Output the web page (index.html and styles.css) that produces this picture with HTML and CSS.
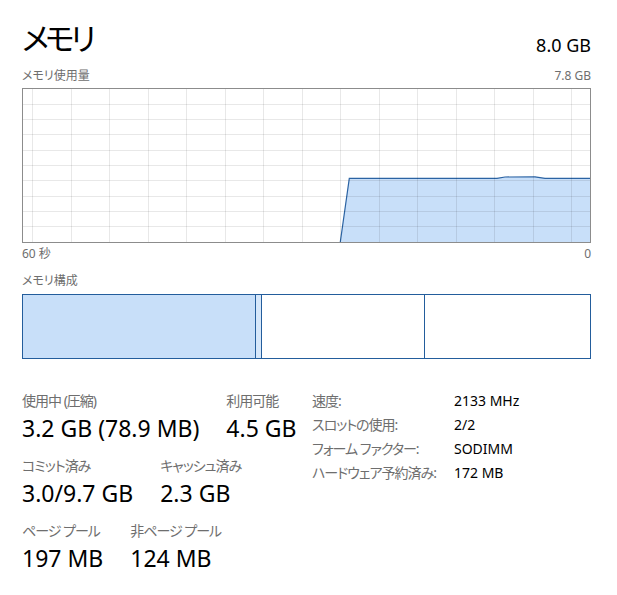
FILE: index.html
```html
<!DOCTYPE html>
<html lang="ja">
<head>
<meta charset="utf-8">
<title>メモリ</title>
<link rel="stylesheet" href="styles.css">
</head>
<body>
<div class="page">
  <header class="header">
    <h1 class="title jp">メモリ</h1>
    <div class="total">8.0 GB</div>
  </header>

  <div class="caption-row">
    <span class="jp">メモリ使用量</span>
    <span>7.8 GB</span>
  </div>

  <div class="graph">
    <svg class="graph-svg" viewBox="0 0 567 153" width="567" height="153">
      <polygon class="area" points="317.3,153 326.3,89.3 474,89.3 482,88 512,87.8 522,89.3 567,89.3 567,153"/>
      <polyline class="area-line" points="317.3,153 326.3,89.3 474,89.3 482,88 512,87.8 522,89.3 567,89.3"/>
      <g class="grid">
        <line x1="9.5" y1="0" x2="9.5" y2="153"/>
        <line x1="48" y1="0" x2="48" y2="153"/>
        <line x1="86.5" y1="0" x2="86.5" y2="153"/>
        <line x1="125" y1="0" x2="125" y2="153"/>
        <line x1="163.5" y1="0" x2="163.5" y2="153"/>
        <line x1="202" y1="0" x2="202" y2="153"/>
        <line x1="240.5" y1="0" x2="240.5" y2="153"/>
        <line x1="279" y1="0" x2="279" y2="153"/>
        <line x1="317.5" y1="0" x2="317.5" y2="153"/>
        <line x1="356" y1="0" x2="356" y2="153"/>
        <line x1="394.5" y1="0" x2="394.5" y2="153"/>
        <line x1="433" y1="0" x2="433" y2="153"/>
        <line x1="471.5" y1="0" x2="471.5" y2="153"/>
        <line x1="510" y1="0" x2="510" y2="153"/>
        <line x1="548.5" y1="0" x2="548.5" y2="153"/>
        <line x1="0" y1="15.3" x2="567" y2="15.3"/>
        <line x1="0" y1="30.6" x2="567" y2="30.6"/>
        <line x1="0" y1="45.9" x2="567" y2="45.9"/>
        <line x1="0" y1="61.2" x2="567" y2="61.2"/>
        <line x1="0" y1="76.5" x2="567" y2="76.5"/>
        <line x1="0" y1="91.8" x2="567" y2="91.8"/>
        <line x1="0" y1="107.1" x2="567" y2="107.1"/>
        <line x1="0" y1="122.4" x2="567" y2="122.4"/>
        <line x1="0" y1="137.7" x2="567" y2="137.7"/>
      </g>
    </svg>
  </div>

  <div class="axis-row">
    <span class="jp">60 秒</span>
    <span>0</span>
  </div>

  <div class="caption jp">メモリ構成</div>

  <div class="composition">
    <div class="seg seg-inuse" style="width:233px"></div>
    <div class="seg seg-modified" style="width:6px"></div>
    <div class="seg seg-standby" style="width:163px"></div>
    <div class="seg seg-free"></div>
  </div>

  <section class="stats">
    <div class="stats-left">
      <div class="stat-row">
        <div class="stat">
          <div class="stat-label jp">使用中 (圧縮)</div>
          <div class="stat-value">3.2 GB (78.9 MB)</div>
        </div>
        <div class="stat">
          <div class="stat-label jp">利用可能</div>
          <div class="stat-value">4.5 GB</div>
        </div>
      </div>
      <div class="stat-row">
        <div class="stat">
          <div class="stat-label jp">コミット済み</div>
          <div class="stat-value">3.0/9.7 GB</div>
        </div>
        <div class="stat">
          <div class="stat-label jp">キャッシュ済み</div>
          <div class="stat-value">2.3 GB</div>
        </div>
      </div>
      <div class="stat-row">
        <div class="stat">
          <div class="stat-label jp">ページ プール</div>
          <div class="stat-value">197 MB</div>
        </div>
        <div class="stat">
          <div class="stat-label jp">非ページ プール</div>
          <div class="stat-value">124 MB</div>
        </div>
      </div>
    </div>

    <dl class="details">
      <dt class="jp">速度:</dt><dd>2133 MHz</dd>
      <dt class="jp">スロットの使用:</dt><dd>2/2</dd>
      <dt class="jp">フォーム ファクター:</dt><dd>SODIMM</dd>
      <dt class="jp">ハードウェア予約済み:</dt><dd>172 MB</dd>
    </dl>
  </section>
</div>
</body>
</html>
```

FILE: styles.css
```css
* {
  box-sizing: border-box;
}

html, body {
  margin: 0;
  padding: 0;
  background: #ffffff;
}

body {
  font-family: "Noto Sans", "Noto Sans CJK JP", sans-serif;
  color: #000000;
}

.jp {
  font-feature-settings: "palt";
}

.page {
  width: 617px;
  padding: 0 26px 0 22px;
}

.header {
  display: flex;
  justify-content: space-between;
  align-items: flex-end;
  height: 40px;
  margin-top: 18px;
}

.title {
  margin: 0;
  font-size: 31px;
  font-weight: 400;
  line-height: 40px;
  letter-spacing: -4px;
}

.total {
  font-size: 18px;
  line-height: 22px;
  padding-bottom: 2px;
}

.caption-row,
.axis-row {
  display: flex;
  justify-content: space-between;
  font-size: 12px;
  line-height: 16px;
  color: #6e6e6e;
}

.caption-row {
  margin-top: 10px;
}

.graph {
  margin-top: 4px;
  height: 155px;
  border: 1px solid #8c8c8c;
  background: #ffffff;
}

.graph-svg {
  display: block;
}

.area {
  fill: #c8dff9;
}

.area-line {
  fill: none;
  stroke: #2b63a3;
  stroke-width: 1.2;
}

.grid line {
  stroke: rgba(0, 0, 0, 0.09);
  stroke-width: 1;
  shape-rendering: crispEdges;
}

.axis-row {
  margin-top: 3px;
}

.caption {
  margin-top: 11px;
  font-size: 12px;
  line-height: 16px;
  color: #6e6e6e;
}

.composition {
  display: flex;
  margin-top: 5px;
  height: 65px;
  border: 1px solid #235d9c;
}

.seg {
  height: 100%;
  border-right: 1px solid #235d9c;
}

.seg-inuse {
  background: #c8dff9;
}

.seg-modified {
  background: #d6e7fa;
}

.seg-standby {
  background: #ffffff;
}

.seg-free {
  flex: 1;
  border-right: none;
  background: #ffffff;
}

.stats {
  display: flex;
  align-items: flex-start;
  margin-top: 30px;
}

.stats-left {
  width: 290px;
  flex: none;
  margin-top: 2px;
}

.stat-row {
  display: flex;
  gap: 27px;
  margin-bottom: 11px;
}

.stat-label {
  font-size: 14px;
  line-height: 20px;
  letter-spacing: -1px;
  color: #6e6e6e;
  white-space: nowrap;
}

.stat-value {
  font-size: 23px;
  line-height: 34px;
  white-space: nowrap;
}

.details {
  display: grid;
  grid-template-columns: 142px auto;
  align-content: start;
  margin: 0;
  font-size: 14px;
  line-height: 24px;
}

.details dt {
  color: #6e6e6e;
  letter-spacing: -1px;
  white-space: nowrap;
}

.details dd {
  margin: 0;
  white-space: nowrap;
}
```
